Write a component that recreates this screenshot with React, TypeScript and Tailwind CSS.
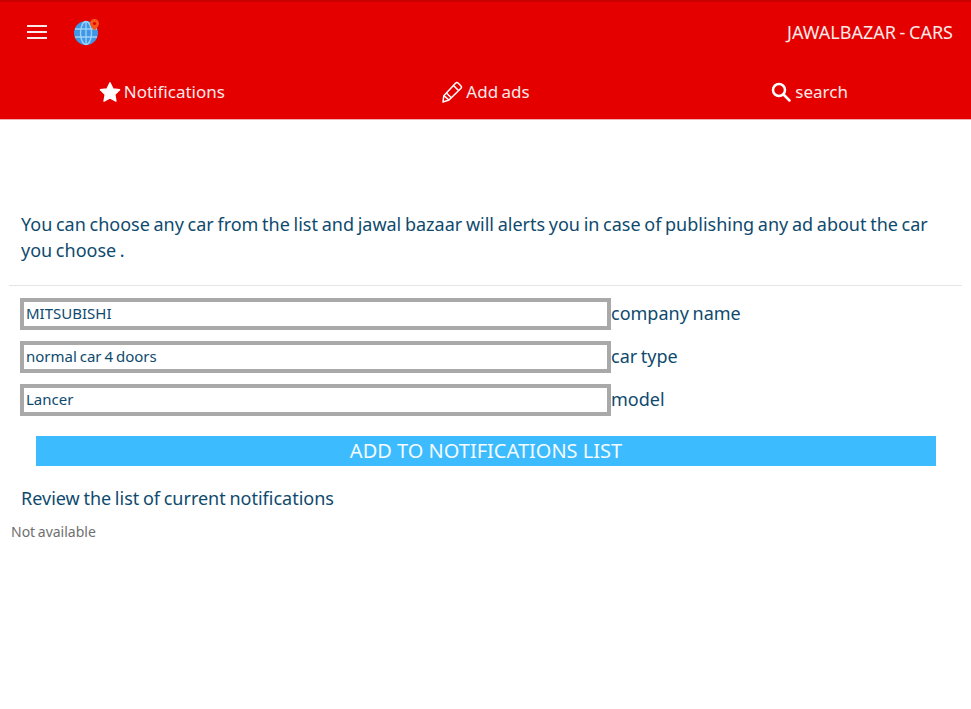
const NAV_ITEMS = [
  {
    label: "Notifications",
    icon: (
      <svg width="22" height="22" viewBox="0 0 24 24" fill="#fff">
        <path d="M12 2l3.200 6.600 7.300 1-5.300 5.100 1.300 7.300-6.500-3.500-6.500 3.500 1.300-7.300-5.300-5.100 7.300-1z" stroke="#fff" strokeWidth="1.500" strokeLinejoin="round" />
      </svg>
    ),
  },
  {
    label: "Add ads",
    icon: (
      <svg width="22" height="22" viewBox="0 0 22 22" fill="none" stroke="#fff" strokeWidth="1.500" strokeLinejoin="round">
        <path d="M14.500 2.200a2 2 0 0 1 2.800 0l2.500 2.500a2 2 0 0 1 0 2.800L8 19l-6 2 .8-6.300z" />
        <path d="M2.800 14.700l5.200 4.300M5.500 12l5 5M12.500 4.500l5 5" />
      </svg>
    ),
  },
  {
    label: "search",
    icon: (
      <svg width="22" height="22" viewBox="0 0 22 22" fill="none" stroke="#fff" strokeWidth="2.500" strokeLinecap="round">
        <circle cx="9" cy="9" r="6" />
        <path d="M13.500 13.500l6 6" />
      </svg>
    ),
  },
];

const FIELDS = [
  { value: "MITSUBISHI", label: "company name" },
  { value: "normal car 4 doors", label: "car type" },
  { value: "Lancer", label: "model" },
];

export default function App() {
  return (
    <div className="h-[709px] w-[971px] overflow-hidden bg-white font-['Noto_Sans','Open_Sans',sans-serif] [word-spacing:-1px]">
      <header className="h-[120px] border-t-2 border-b border-t-[#c80000] border-b-[#f0b0b0] bg-[#e50000] text-[#fbe9e9]">
        <div className="flex h-[59px] items-center pr-[18px]">
          <div className="ml-[27px] flex w-5 flex-col gap-[4px]">
            <span className="h-[2px] bg-[#fbe9e9]" />
            <span className="h-[2px] bg-[#fbe9e9]" />
            <span className="h-[2px] bg-[#fbe9e9]" />
          </div>
          <svg className="ml-[26px] mt-[1px]" width="28" height="28" viewBox="0 0 28 28">
            <circle cx="13" cy="15" r="12" fill="#3f97e6" />
            <g stroke="#9ed3f7" strokeWidth="1.300" fill="none">
              <ellipse cx="13" cy="15" rx="5.500" ry="11.500" />
              <path d="M13 3.500v23M2 11h22M2 19h22" />
            </g>
            <path d="M21.500 1a4.500 4.500 0 0 1 4.500 4.500c0 3-4.500 7-4.500 7s-4.500-4-4.500-7A4.500 4.500 0 0 1 21.500 1z" fill="#f25a1c" />
            <circle cx="21.500" cy="5.500" r="1.600" fill="#e50000" />
          </svg>
          <span className="ml-auto text-[18px] leading-6">JAWALBAZAR - CARS</span>
        </div>
        <nav className="grid h-[58px] grid-cols-3">
          {NAV_ITEMS.map((item) => (
            <div key={item.label} className="flex items-center justify-center gap-[3px] pt-[4px] text-[17px]">
              {item.icon}
              <span>{item.label}</span>
            </div>
          ))}
        </nav>
      </header>

      <main className="pt-[91px] text-[#0e4a6e]">
        <p className="px-[21px] text-[18px] leading-[26px]">
          You can choose any car from the list and jawal bazaar will alerts you in case of publishing any ad about the car you choose .
        </p>
        <hr className="mx-[9px] mt-[22px] border-[#e4e4e4]" />

        <div className="mt-[12px] flex flex-col gap-[11px] pl-[20px]">
          {FIELDS.map((field) => (
            <div key={field.label} className="flex items-center">
              <div className="flex h-8 w-[591px] items-center border-4 border-[#a9a9a9] bg-white pb-[2px] pl-[2px] text-[15px]">
                {field.value}
              </div>
              <span className="pb-[2px] text-[18px]">{field.label}</span>
            </div>
          ))}
        </div>

        <button className="mx-[36px] mt-[20px] block h-[30px] w-[900px] bg-[#3dbbff] text-[20px] leading-[30px] text-[#f4fbff]">
          ADD TO NOTIFICATIONS LIST
        </button>

        <p className="mt-[20px] pl-[21px] text-[18px] leading-6">Review the list of current notifications</p>
        <p className="mt-[12px] pl-[11px] text-[14px] leading-5 text-[#6f6f6f]">Not available</p>
      </main>
    </div>
  );
}
